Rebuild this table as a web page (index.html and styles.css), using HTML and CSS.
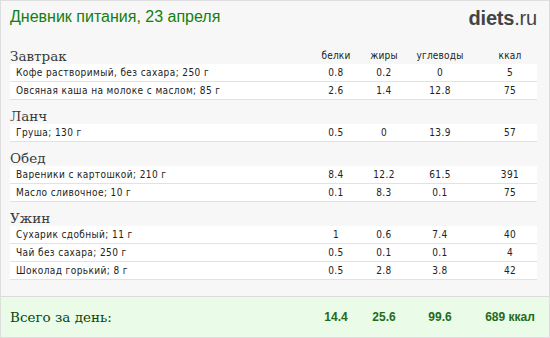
FILE: index.html
```html
<!DOCTYPE html>
<html lang="ru">
<head>
<meta charset="utf-8">
<title>Дневник питания</title>
<link rel="stylesheet" href="styles.css">
</head>
<body>
<div class="page">
  <header class="top">
    <h1 class="title">Дневник питания, 23 апреля</h1>
    <div class="logo"><b>diets</b>.ru</div>
  </header>

  <div class="diary">
    <div class="head">
      <div class="meal">Завтрак</div>
      <div class="lbl">белки</div><div class="lbl">жиры</div><div class="lbl">углеводы</div><div class="lbl">ккал</div>
    </div>
    <div class="row"><div class="name">Кофе растворимый, без сахара; 250 г</div><div>0.8</div><div>0.2</div><div>0</div><div>5</div></div>
    <div class="row"><div class="name">Овсяная каша на молоке с маслом; 85 г</div><div>2.6</div><div>1.4</div><div>12.8</div><div>75</div></div>

    <div class="head"><div class="meal">Ланч</div></div>
    <div class="row"><div class="name">Груша; 130 г</div><div>0.5</div><div>0</div><div>13.9</div><div>57</div></div>

    <div class="head"><div class="meal">Обед</div></div>
    <div class="row"><div class="name">Вареники с картошкой; 210 г</div><div>8.4</div><div>12.2</div><div>61.5</div><div>391</div></div>
    <div class="row"><div class="name">Масло сливочное; 10 г</div><div>0.1</div><div>8.3</div><div>0.1</div><div>75</div></div>

    <div class="head"><div class="meal">Ужин</div></div>
    <div class="row"><div class="name">Сухарик сдобный; 11 г</div><div>1</div><div>0.6</div><div>7.4</div><div>40</div></div>
    <div class="row"><div class="name">Чай без сахара; 250 г</div><div>0.5</div><div>0.1</div><div>0.1</div><div>4</div></div>
    <div class="row"><div class="name">Шоколад горький; 8 г</div><div>0.5</div><div>2.8</div><div>3.8</div><div>42</div></div>
  </div>

  <footer class="total">
    <div class="total-label">Всего за день:</div>
    <div>14.4</div><div>25.6</div><div>99.6</div><div>689 ккал</div>
  </footer>
</div>
</body>
</html>
```

FILE: styles.css
```css
html, body {
  margin: 0;
  padding: 0;
  background: #ffffff;
}

.page {
  width: 548px;
  height: 336px;
  border: 1px solid #dedede;
  background: #f7f7f7;
  display: flex;
  flex-direction: column;
}

.top {
  height: 39px;
  padding: 0 12px 0 9px;
  display: flex;
  justify-content: space-between;
  align-items: flex-start;
}

.title {
  margin: 6px 0 0 0;
  font-family: "Liberation Sans", Arial, sans-serif;
  font-weight: normal;
  font-size: 16px;
  line-height: 20px;
  color: #108010;
}

.logo {
  margin-top: 6px;
  font-family: "Liberation Sans", Arial, sans-serif;
  font-size: 20px;
  line-height: 22px;
  color: #444444;
  letter-spacing: -0.2px;
}

.logo b {
  font-weight: bold;
}

.diary {
  padding: 0 12px 0 9px;
}

.head,
.row,
.total {
  display: grid;
  grid-template-columns: 291px 70px 26px 86px 54px;
}

.head {
  height: 24px;
  padding-top: 8px;
  box-sizing: border-box;
  line-height: 16px;
}

.meal {
  font-family: "DejaVu Serif", Georgia, serif;
  font-size: 13.5px;
  color: #3a3a3a;
}

.lbl {
  font-family: "DejaVu Sans Condensed", "DejaVu Sans", Verdana, sans-serif;
  font-size: 10px;
  letter-spacing: 0.2px;
  color: #222222;
  white-space: nowrap;
  display: flex;
  justify-content: center;
}

.row {
  height: 17px;
  line-height: 17px;
  background: #ffffff;
  border-bottom: 1px solid #e2e2e2;
  font-family: "DejaVu Sans Condensed", "DejaVu Sans", Verdana, sans-serif;
  font-size: 10px;
  letter-spacing: 0.4px;
  color: #222222;
}

.row > div {
  text-align: center;
  white-space: nowrap;
}

.row > .name {
  text-align: left;
  padding-left: 6px;
}

.total {
  margin-top: auto;
  height: 40px;
  line-height: 40px;
  padding: 0 12px 0 9px;
  background: #eafce7;
  border-top: 1px solid #dcdcdc;
  font-family: "Liberation Sans", Arial, sans-serif;
  font-weight: bold;
  font-size: 12px;
  color: #236b1c;
}

.total > div {
  text-align: center;
  white-space: nowrap;
  display: flex;
  justify-content: center;
}

.total > .total-label {
  justify-content: flex-start;
  font-family: "DejaVu Serif", Georgia, serif;
  font-weight: normal;
  font-size: 13.5px;
  color: #0b460b;
}
```
